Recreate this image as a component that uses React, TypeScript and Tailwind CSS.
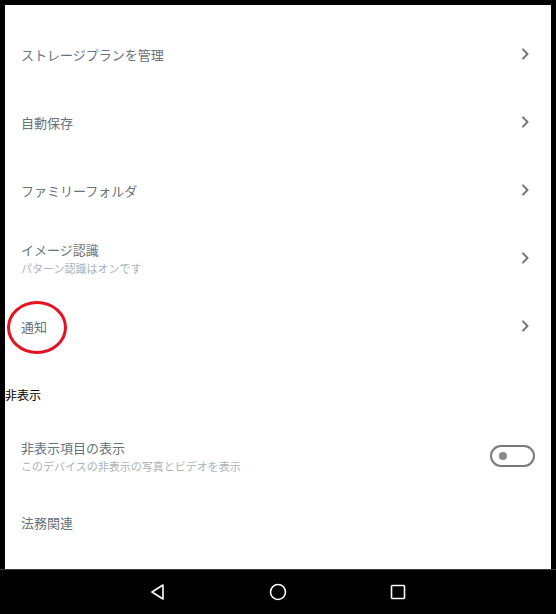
import React from "react";

const font = { fontFamily: '"Noto Sans CJK JP", "Noto Sans", sans-serif' };

function Chevron() {
  return (
    <svg width="10" height="14" viewBox="0 0 10 14" className="shrink-0">
      <path d="M2.5 1.8 L7.5 7 L2.5 12.2" fill="none" stroke="#707070" strokeWidth="1.9" />
    </svg>
  );
}

function Row({ title, sub, h = "h-[68px]", right }: { title: string; sub?: string; h?: string; right?: React.ReactNode }) {
  return (
    <div className={`flex items-center justify-between pl-4 pr-[21px] ${h}`}>
      <div className="flex flex-col">
        <span className="text-[13px] leading-[19px] text-[#66737b]">{title}</span>
        {sub && <span className="text-[11px] leading-[18px] text-[#aab3b9]">{sub}</span>}
      </div>
      {right ?? <Chevron />}
    </div>
  );
}

export default function App() {
  return (
    <div className="w-[556px] h-[614px] bg-black flex flex-col" style={font}>
      <div className="mx-[5px] mt-[5px] h-[564px] bg-white flex flex-col pt-[15px] relative overflow-hidden">
        <Row title="ストレージプランを管理" />
        <Row title="自動保存" />
        <Row title="ファミリーフォルダ" />
        <Row title="イメージ認識" sub="パターン認識はオンです" />
        <div className="relative">
          <Row title="通知" />
          <div className="absolute left-[2px] top-[9px] w-[60px] h-[53px] rounded-[50%] border-[3px] border-[#e3141f]" />
        </div>
        <div className="h-[64px] pt-[6px] flex items-center text-[12px] text-black">非表示</div>
        <Row
          title="非表示項目の表示"
          sub="このデバイスの非表示の写真とビデオを表示"
          h="h-[64px]"
          right={
            <div className="w-[45px] h-[22px] rounded-full border-2 border-[#7a7a7a] flex items-center pl-[7px] mr-[-5px]">
              <div className="w-[8px] h-[8px] rounded-full bg-[#8a8a8a]" />
            </div>
          }
        />
        <Row title="法務関連" right={<span />} />
      </div>
      <div className="h-px bg-[#3a3a3a]" />
      <div className="flex-1 flex items-center justify-center gap-[102px] pb-[1px]">
        <svg width="18" height="18" viewBox="0 0 18 18">
          <path d="M14 2 L3 9 L14 16 Z" fill="none" stroke="white" strokeWidth="1.6" strokeLinejoin="round" />
        </svg>
        <svg width="18" height="18" viewBox="0 0 18 18">
          <circle cx="9" cy="9" r="7.5" fill="none" stroke="white" strokeWidth="1.6" />
        </svg>
        <svg width="18" height="18" viewBox="0 0 18 18">
          <rect x="2.5" y="2.5" width="13" height="13" rx="1" fill="none" stroke="white" strokeWidth="1.6" />
        </svg>
      </div>
    </div>
  );
}
